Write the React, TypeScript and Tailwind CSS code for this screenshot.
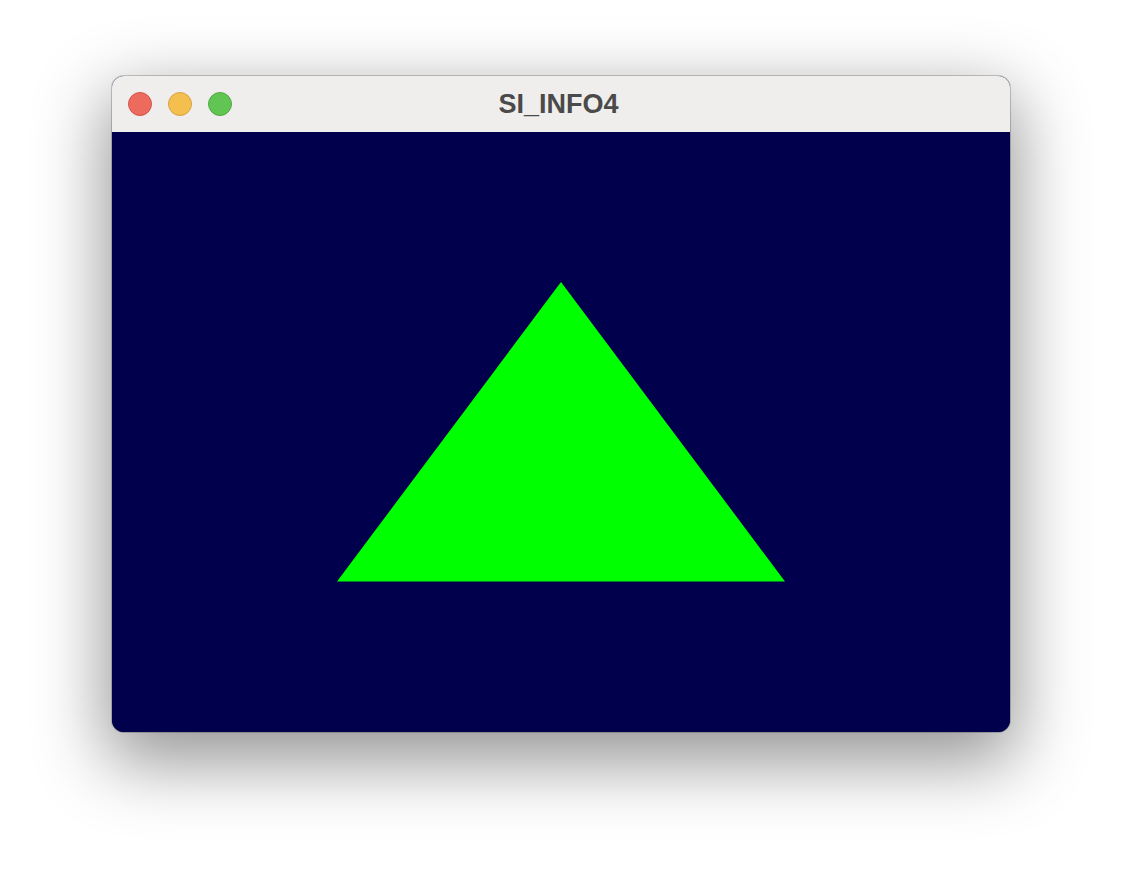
// Ventana macOS con un lienzo OpenGL: fondo azul noche y un triángulo verde.
const LUCES = [
  { fondo: 'bg-[#ed6a5e]', borde: 'border-[#d25548]' },
  { fondo: 'bg-[#f5bf4f]', borde: 'border-[#d6a243]' },
  { fondo: 'bg-[#61c554]', borde: 'border-[#52a842]' },
];

function Lienzo() {
  return (
    <svg viewBox="0 0 898 600" className="block h-[600px] w-full" aria-hidden>
      <rect width="898" height="600" fill="#00004c" />
      <polygon points="449,150 225,449.5 673,449.5" fill="#00ff00" />
    </svg>
  );
}

export default function App() {
  return (
    <div className="min-h-[880px] w-[1122px] bg-white pl-[112px] pt-[76px]">
      <div className="w-[898px] overflow-hidden rounded-[12px] bg-[#00004c] shadow-[0_24px_70px_6px_rgba(0,0,0,0.42)] ring-1 ring-black/20">
        <div className="relative flex h-[56px] items-center bg-[#f0eeed] px-[16px]">
          <div className="flex gap-[16px]">
            {LUCES.map((l, i) => (
              <span key={i} className={`h-[24px] w-[24px] rounded-full border ${l.fondo} ${l.borde}`} />
            ))}
          </div>
          <p className="absolute inset-x-0 pr-[5px] text-center font-['Liberation_Sans',Arial,sans-serif] text-[27px] font-bold leading-none text-[#4a4a4a]">
            SI_INFO4
          </p>
        </div>
        <Lienzo />
      </div>
    </div>
  );
}
